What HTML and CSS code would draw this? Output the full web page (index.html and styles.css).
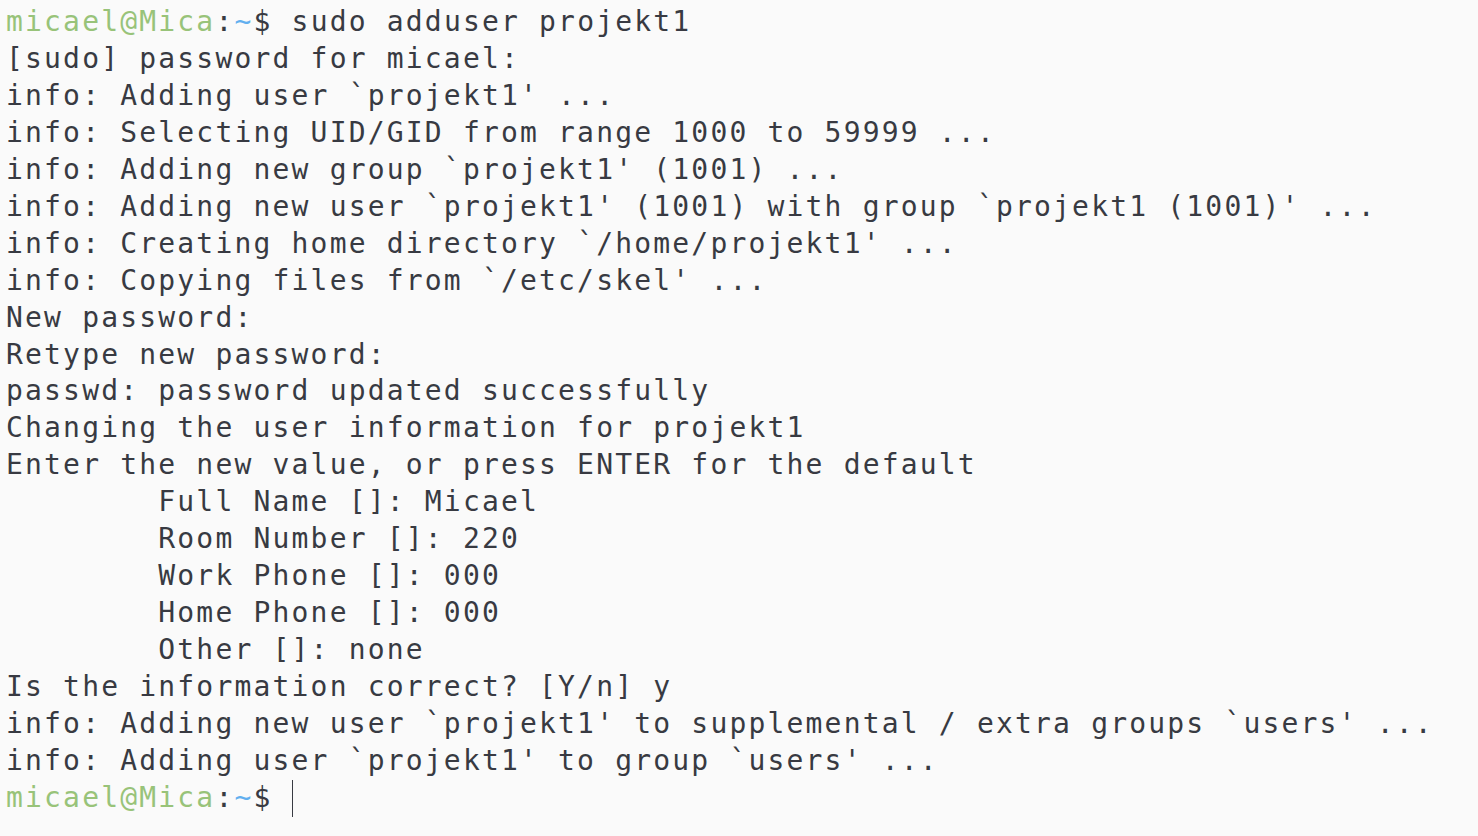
FILE: index.html
```html
<!DOCTYPE html>
<html lang="en">
<head>
<meta charset="utf-8">
<title>Terminal</title>
<link rel="stylesheet" href="styles.css">
</head>
<body>
<main class="term">
<div class="line cut">To copy user files, type: sudo cp -rp /etc/skel /home/projekt1 g</div>
<div class="line"><span class="user">micael@Mica</span>:<span class="path">~</span>$ sudo adduser projekt1</div>
<div class="line">[sudo] password for micael:</div>
<div class="line">info: Adding user `projekt1' ...</div>
<div class="line">info: Selecting UID/GID from range 1000 to 59999 ...</div>
<div class="line">info: Adding new group `projekt1' (1001) ...</div>
<div class="line">info: Adding new user `projekt1' (1001) with group `projekt1 (1001)' ...</div>
<div class="line">info: Creating home directory `/home/projekt1' ...</div>
<div class="line">info: Copying files from `/etc/skel' ...</div>
<div class="line">New password:</div>
<div class="line">Retype new password:</div>
<div class="line">passwd: password updated successfully</div>
<div class="line">Changing the user information for projekt1</div>
<div class="line">Enter the new value, or press ENTER for the default</div>
<div class="line">        Full Name []: Micael</div>
<div class="line">        Room Number []: 220</div>
<div class="line">        Work Phone []: 000</div>
<div class="line">        Home Phone []: 000</div>
<div class="line">        Other []: none</div>
<div class="line">Is the information correct? [Y/n] y</div>
<div class="line">info: Adding new user `projekt1' to supplemental / extra groups `users' ...</div>
<div class="line">info: Adding user `projekt1' to group `users' ...</div>
<div class="line"><span class="user">micael@Mica</span>:<span class="path">~</span>$ <span class="cursor"></span></div>
</main>
</body>
</html>
```
FILE: styles.css
```css
html, body {
  margin: 0;
  padding: 0;
  background: #fafafa;
  overflow: hidden;
  height: 100%;
}

.term {
  padding: 3.8px 0 0 6px;
  font-family: "DejaVu Sans Mono", "Liberation Mono", monospace;
  font-size: 28px;
  letter-spacing: 2.18px;
  line-height: 36.98px;
  color: #383a42;
}

.line {
  white-space: pre;
  height: 36.98px;
}

.cut {
  margin-top: -36.98px;
}

.user {
  color: #98c379;
}

.path {
  color: #61afef;
}

.cursor {
  display: inline-block;
  width: 1px;
  height: 36.98px;
  background: #383a42;
  vertical-align: top;
}
```
